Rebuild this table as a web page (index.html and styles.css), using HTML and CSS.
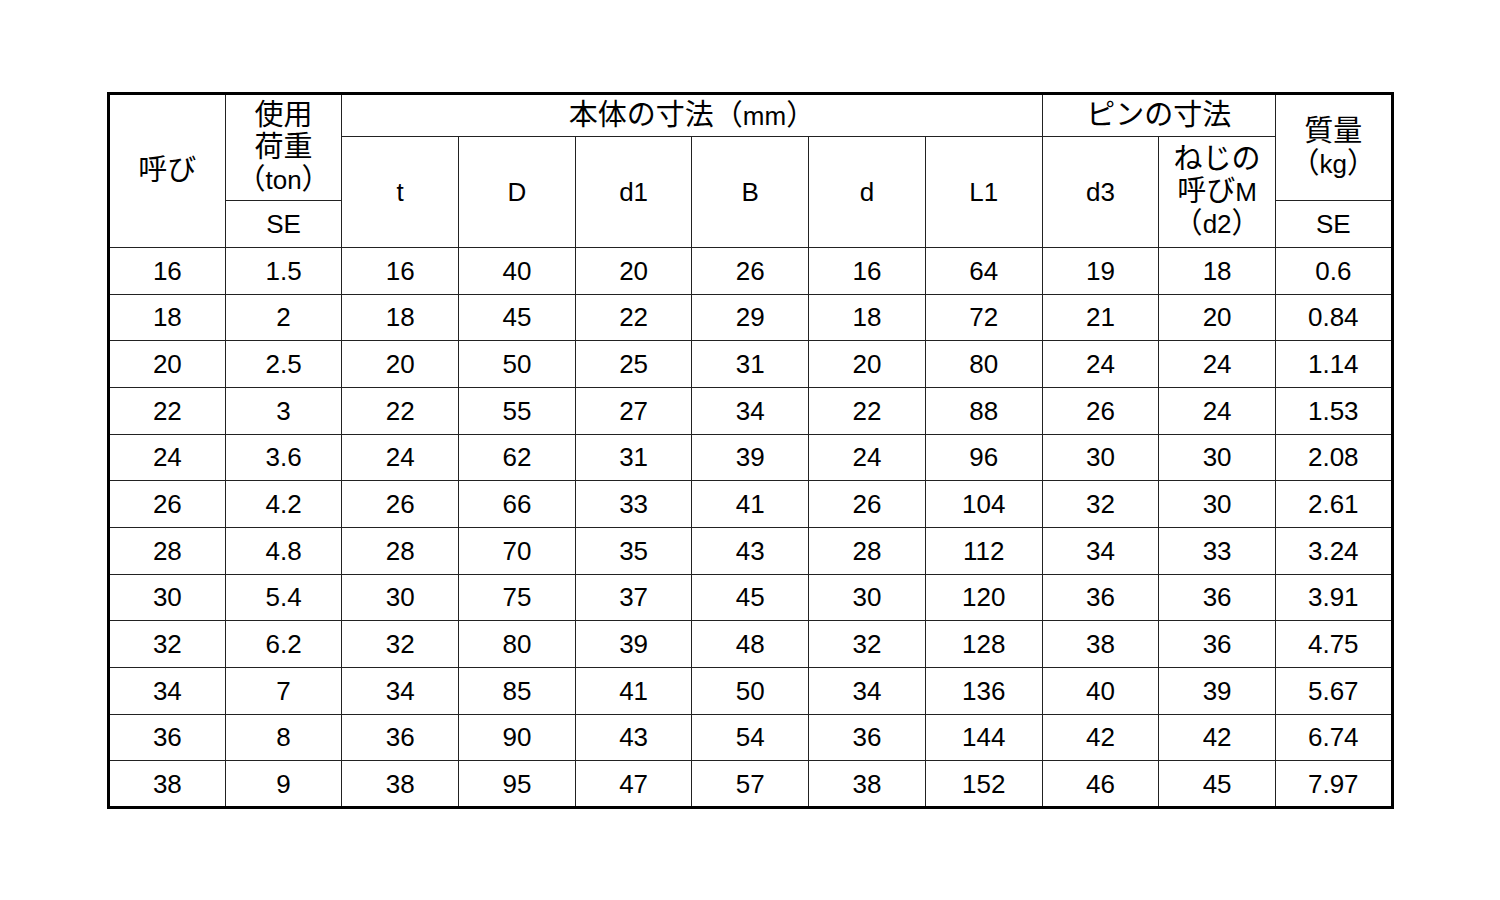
FILE: index.html
```html
<!DOCTYPE html>
<html lang="ja">
<head>
<meta charset="utf-8">
<link rel="stylesheet" href="styles.css">
</head>
<body>
<table class="spec">
<colgroup>
<col class="c"><col class="c"><col class="c"><col class="c"><col class="c"><col class="c"><col class="c"><col class="c"><col class="c"><col class="c"><col class="c">
</colgroup>
<thead>
<tr class="h1">
<td rowspan="3"><span class="j">呼び</span></td>
<td rowspan="2"><span class="j">使用</span><br><span class="j">荷重</span><br><span class="j">（</span>ton<span class="j">）</span></td>
<td colspan="6"><span class="j">本体の寸法（</span>mm<span class="j">）</span></td>
<td colspan="2"><span class="j">ピンの寸法</span></td>
<td rowspan="2"><span class="j">質量</span><br><span class="j">（</span>kg<span class="j">）</span></td>
</tr>
<tr class="h2">
<td rowspan="2">t</td>
<td rowspan="2">D</td>
<td rowspan="2">d1</td>
<td rowspan="2">B</td>
<td rowspan="2">d</td>
<td rowspan="2">L1</td>
<td rowspan="2">d3</td>
<td rowspan="2"><span class="j">ねじの</span><br><span class="j">呼び</span>M<br><span class="j">（</span>d2<span class="j">）</span></td>
</tr>
<tr class="h3">
<td>SE</td>
<td>SE</td>
</tr>
</thead>
<tbody>
<tr><td>16</td><td>1.5</td><td>16</td><td>40</td><td>20</td><td>26</td><td>16</td><td>64</td><td>19</td><td>18</td><td>0.6</td></tr>
<tr><td>18</td><td>2</td><td>18</td><td>45</td><td>22</td><td>29</td><td>18</td><td>72</td><td>21</td><td>20</td><td>0.84</td></tr>
<tr><td>20</td><td>2.5</td><td>20</td><td>50</td><td>25</td><td>31</td><td>20</td><td>80</td><td>24</td><td>24</td><td>1.14</td></tr>
<tr><td>22</td><td>3</td><td>22</td><td>55</td><td>27</td><td>34</td><td>22</td><td>88</td><td>26</td><td>24</td><td>1.53</td></tr>
<tr><td>24</td><td>3.6</td><td>24</td><td>62</td><td>31</td><td>39</td><td>24</td><td>96</td><td>30</td><td>30</td><td>2.08</td></tr>
<tr><td>26</td><td>4.2</td><td>26</td><td>66</td><td>33</td><td>41</td><td>26</td><td>104</td><td>32</td><td>30</td><td>2.61</td></tr>
<tr><td>28</td><td>4.8</td><td>28</td><td>70</td><td>35</td><td>43</td><td>28</td><td>112</td><td>34</td><td>33</td><td>3.24</td></tr>
<tr><td>30</td><td>5.4</td><td>30</td><td>75</td><td>37</td><td>45</td><td>30</td><td>120</td><td>36</td><td>36</td><td>3.91</td></tr>
<tr><td>32</td><td>6.2</td><td>32</td><td>80</td><td>39</td><td>48</td><td>32</td><td>128</td><td>38</td><td>36</td><td>4.75</td></tr>
<tr><td>34</td><td>7</td><td>34</td><td>85</td><td>41</td><td>50</td><td>34</td><td>136</td><td>40</td><td>39</td><td>5.67</td></tr>
<tr><td>36</td><td>8</td><td>36</td><td>90</td><td>43</td><td>54</td><td>36</td><td>144</td><td>42</td><td>42</td><td>6.74</td></tr>
<tr><td>38</td><td>9</td><td>38</td><td>95</td><td>47</td><td>57</td><td>38</td><td>152</td><td>46</td><td>45</td><td>7.97</td></tr>
</tbody>
</table>
</body>
</html>
```
FILE: styles.css
```css
html, body {
  margin: 0;
  padding: 0;
  background: #fff;
}
body {
  padding: 92px 0 0 107px;
  font-family: "Liberation Sans", "Noto Sans CJK JP", sans-serif;
  color: #000;
}
.spec {
  border-collapse: collapse;
  table-layout: fixed;
  width: 1284px;
  border: 3px solid #000;
}
.spec col.c {
  width: 116.7px;
}
.spec td {
  border: 1px solid #222;
  padding: 0;
  text-align: center;
  vertical-align: middle;
  font-size: 26px;
  line-height: 32px;
}
.spec .j {
  display: inline-block;
  vertical-align: top;
  height: 32px;
  overflow: visible;
  white-space: nowrap;
  font-family: "Noto Sans CJK JP", sans-serif;
  font-size: 29px;
  line-height: 24.7px;
}
.spec tr.h1 { height: 43px; }
.spec tr.h2 { height: 64px; }
.spec tr.h3 { height: 47px; }
.spec tbody tr { height: 46.67px; }
```
